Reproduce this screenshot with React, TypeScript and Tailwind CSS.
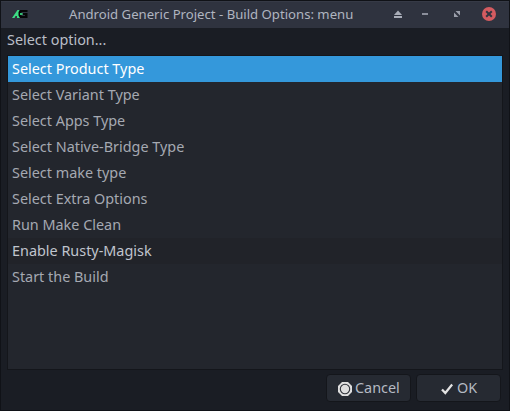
const items = [
  "Select Product Type",
  "Select Variant Type",
  "Select Apps Type",
  "Select Native-Bridge Type",
  "Select make type",
  "Select Extra Options",
  "Run Make Clean",
  "Enable Rusty-Magisk",
  "Start the Build",
];

function rowStyle(index: number) {
  if (index === 0) return "bg-[#3498db] text-white";
  if (index === 7) return "bg-[#212329] text-[#c0c5ce]";
  return "text-[#a5a9b2]";
}

function AppLogo() {
  return (
    <svg className="ml-[11px] h-2 w-4 shrink-0" viewBox="0 0 16 8">
      <path d="M0 8 5.500 0H7.500L7 3l1.500 3v2H5V6H3.500L2.500 8Z" fill="#3ddc84" />
      <path d="M8 0h7.500v2H9.500v4H13V5h-2V3h4.500v5H8L6.500 5.500V2Z" fill="#050607" />
      <path d="M8 3h2.500v2H8Z" fill="#32c274" />
    </svg>
  );
}

function WindowControls() {
  return (
    <div className="ml-auto mr-[13px] flex items-center">
      <svg className="mr-[20px] h-2 w-2" viewBox="0 0 8 8" fill="#a9adb8">
        <path d="M4 0.500 8 5H0Z" />
        <path d="M0 6h8v2H0Z" />
      </svg>
      <span className="mr-[26px] h-0.5 w-1.5 bg-[#8b8f9b]" />
      <svg className="mr-[22px] h-1.5 w-1.5" viewBox="0 0 6 6" fill="#9a9eaa">
        <path d="M1.500 0H6v4.500ZM0 1.500V6h4.500Z" />
      </svg>
      <svg className="h-3.5 w-3.5" viewBox="0 0 14 14">
        <circle cx="7" cy="7" r="7" fill="#d35b60" />
        <path d="m4.200 4.200 5.600 5.600m0-5.600-5.600 5.600" stroke="#303440" strokeWidth="2" />
      </svg>
    </div>
  );
}

const buttonStyle =
  "flex h-7 w-[85px] items-center rounded-sm border border-[#14161b] bg-[#262a32] text-[#b5bac3]";

export default function App() {
  return (
    <div className="flex h-[411px] w-[510px] flex-col overflow-hidden border border-[#101217] bg-[#1a1d24] font-['Noto_Sans',sans-serif] text-[#b9bec7]">
      <header className="flex h-[27px] shrink-0 items-center border-t border-[#363a46] bg-[#2f333f] pb-0.5">
        <AppLogo />
        <h1 className="ml-[41px] whitespace-nowrap text-[13.15px] leading-[24px] text-[#b0b5c0]">Android Generic Project - Build Options: menu</h1>
        <WindowControls />
      </header>
      <p className="h-[27px] shrink-0 pl-1.5 pt-0.5 text-[14.4px] leading-[20px]">Select option...</p>
      <ul className="mx-1.5 h-[315px] shrink-0 border border-[#14161b] bg-[#23262d]">
        {items.map((text, i) => (
          <li key={text} className={`h-[26px] pl-1 text-[14.4px] leading-[26px] ${rowStyle(i)}`}>{text}</li>
        ))}
      </ul>
      <footer className="mt-1 flex justify-end gap-[5px] pr-2 text-[14.4px] leading-[20px]">
        <button className={`${buttonStyle} pl-[11px]`}>
          <svg className="mr-[3px] mt-0.5 h-3.5 w-3.5" viewBox="0 0 14 14">
            <path d="M4 0h6l4 4v6l-4 4H4l-4-4V4Z" fill="#dedede" />
            <circle cx="7" cy="7" r="4.700" fill="none" stroke="#30333a" strokeWidth="1.100" />
          </svg>
          <span>Cancel</span>
        </button>
        <button className={`${buttonStyle} pl-6`}>
          <svg className="mr-[4px] mt-0.5 h-3 w-3" viewBox="0 0 12 12">
            <path d="m1 6.500 3.300 3.500L11.200 1.500" fill="none" stroke="#e3e3e3" strokeWidth="2.300" />
          </svg>
          <span>OK</span>
        </button>
      </footer>
    </div>
  );
}
